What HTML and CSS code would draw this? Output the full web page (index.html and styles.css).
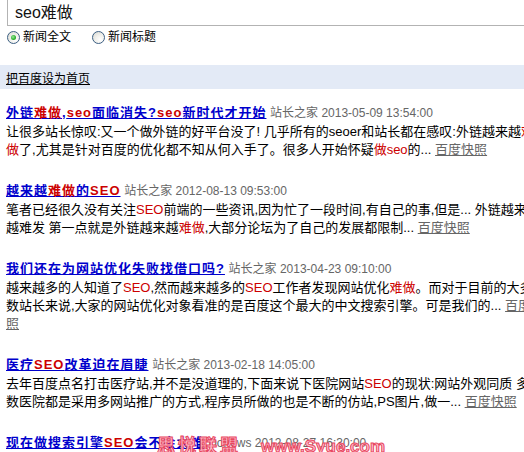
FILE: index.html
```html
<!DOCTYPE html>
<html lang="zh-CN">
<head>
<meta charset="utf-8">
<title>seo难做</title>
<link rel="stylesheet" href="styles.css">
</head>
<body>
<div class="page">
  <div class="search"><span class="q">seo难做</span></div>
  <div class="opts">
    <label class="opt"><span class="radio on"></span>新闻全文</label>
    <label class="opt"><span class="radio"></span>新闻标题</label>
  </div>
  <div class="band"><a class="home" href="#">把百度设为首页</a></div>
  <div class="results">
    <div class="result">
      <div class="head"><a class="title" href="#">外链<em>难做</em>,<em>seo</em>面临消失?<em>seo</em>新时代才开始</a> <span class="src">站长之家 2013-05-09 13:54:00</span></div>
      <div class="snip">让很多站长惊叹:又一个做外链的好平台没了! 几乎所有的seoer和站长都在感叹:外链越来越<em>难做</em>了,尤其是针对百度的优化都不知从何入手了。很多人开始怀疑<em>做seo</em>的... <a class="cache" href="#">百度快照</a></div>
    </div>
    <div class="result">
      <div class="head"><a class="title" href="#">越来越<em>难做</em>的<em>SEO</em></a> <span class="src">站长之家 2012-08-13 09:53:00</span></div>
      <div class="snip">笔者已经很久没有关注<em>SEO</em>前端的一些资讯,因为忙了一段时间,有自己的事,但是... 外链越来越难发 第一点就是外链越来越<em>难做</em>,大部分论坛为了自己的发展都限制... <a class="cache" href="#">百度快照</a></div>
    </div>
    <div class="result">
      <div class="head"><a class="title" href="#">我们还在为网站优化失败找借口吗?</a> <span class="src">站长之家 2013-04-23 09:10:00</span></div>
      <div class="snip snip-wide">越来越多的人知道了<em>SEO</em>,然而越来越多的<em>SEO</em>工作者发现网站优化<em>难做</em>。而对于目前的大多数站长来说,大家的网站优化对象看准的是百度这个最大的中文搜索引擎。可是我们的... <a class="cache" href="#">百度快照</a></div>
    </div>
    <div class="result">
      <div class="head"><a class="title" href="#">医疗<em>SEO</em>改革迫在眉睫</a> <span class="src">站长之家 2013-02-18 14:05:00</span></div>
      <div class="snip">去年百度点名打击医疗站,并不是没道理的,下面来说下医院网站<em>SEO</em>的现状:网站外观同质 多数医院都是采用多网站推广的方式,程序员所做的也是不断的仿站,PS图片,做一... <a class="cache" href="#">百度快照</a></div>
    </div>
    <div class="result">
      <div class="head"><a class="title" href="#">现在做搜索引擎<em>SEO</em>会不会太难</a> <span class="src">Donews 2012-08-27 16:30:00</span></div>
    </div>
  </div>
  <div class="watermark"><span class="wm-cn">思悦联盟</span><span class="wm-en">www.Syue.com</span></div>
</div>
</body>
</html>
```
FILE: styles.css
```css
html, body {
  margin: 0;
  padding: 0;
  overflow: hidden;
  background: #fff;
}
body {
  font-family: "Liberation Sans", Arial, "Noto Sans CJK SC", sans-serif;
  font-size: 13px;
  color: #000;
}
.page {
  position: relative;
  width: 524px;
  height: 452px;
  overflow: hidden;
}
.search {
  margin: -12px 0 0 7px;
  width: 560px;
  height: 38px;
  box-sizing: border-box;
  border: 1px solid #b3b3b3;
  display: flex;
  align-items: flex-end;
  padding: 0 0 2px 7px;
}
.q {
  font-size: 16px;
  line-height: 20px;
  color: #111;
}
.opts {
  display: flex;
  padding: 4px 0 0 7px;
  height: 14px;
  font-size: 12px;
  line-height: 14px;
}
.opt {
  display: flex;
  align-items: center;
  gap: 3px;
  margin-right: 21px;
}
.radio {
  width: 11px;
  height: 11px;
  border: 1px solid #3c5f83;
  border-radius: 50%;
  background: radial-gradient(circle at 65% 70%, #ffffff 0, #f0f0ec 45%, #d6d6cf 100%);
  position: relative;
  box-sizing: content-box;
}
.radio.on::after {
  content: "";
  position: absolute;
  left: 3px;
  top: 3px;
  width: 5px;
  height: 5px;
  border-radius: 50%;
  background: radial-gradient(circle at 40% 40%, #9be69b 0, #29b12a 60%, #1a8a1c 100%);
}
.band {
  margin-top: 21px;
  height: 24px;
  background: #e3eaf6;
  display: flex;
  align-items: center;
  padding-left: 6px;
}
.home {
  font-size: 12px;
  color: #000;
  text-decoration: underline;
}
.results {
  padding: 14px 0 0 6px;
  width: 532px;
}
.result {
  margin-bottom: 22px;
}
.head {
  line-height: 20px;
  white-space: nowrap;
}
.title {
  color: #0000cc;
  font-weight: bold;
  letter-spacing: 1px;
  text-decoration: underline;
}
.title em {
  font-style: normal;
  color: #cc0000;
}
.src {
  font-size: 12px;
  color: #666;
}
.snip {
  line-height: 18px;
  color: #000;
}
.snip-wide {
  width: 538.5px;
}
.snip em {
  font-style: normal;
  color: #cc0000;
}
.cache {
  color: #666;
  text-decoration: underline;
}
.watermark {
  position: absolute;
  left: 157px;
  top: 431px;
  display: flex;
  align-items: baseline;
  gap: 20px;
  color: #ffc0cf;
  -webkit-text-stroke: 1px #e8475f;
  font-weight: bold;
  pointer-events: none;
}
.wm-cn {
  font-size: 18px;
  letter-spacing: 3px;
}
.wm-en {
  font-size: 17px;
  font-family: "Liberation Sans", Arial, sans-serif;
}
```
